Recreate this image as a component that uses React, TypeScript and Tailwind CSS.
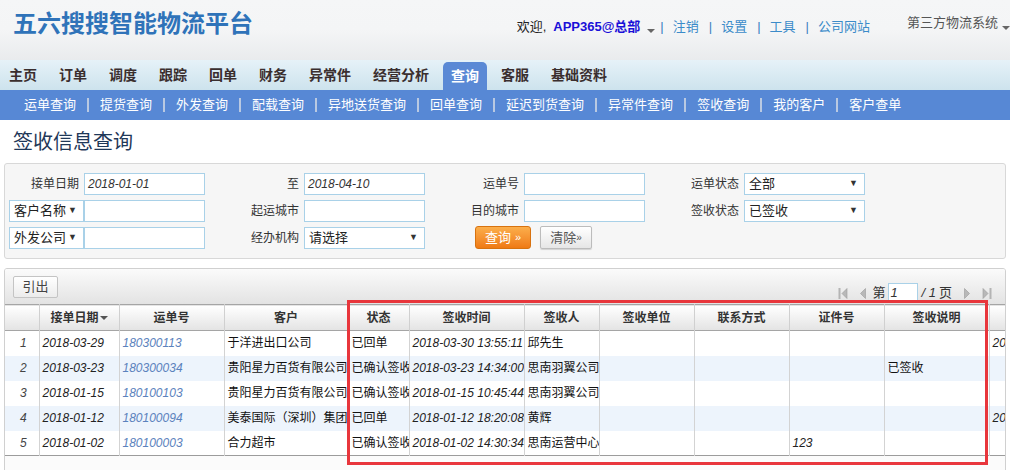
import React from 'react';

const topLinks = ['注销', '设置', '工具', '公司网站'];
const navItems = ['主页', '订单', '调度', '跟踪', '回单', '财务', '异常件', '经营分析', '查询', '客服', '基础资料'];
const subItems = ['运单查询', '提货查询', '外发查询', '配载查询', '异地送货查询', '回单查询', '延迟到货查询', '异常件查询', '签收查询', '我的客户', '客户查单'];

const cols = [
  { title: '', w: 34 },
  { title: '接单日期', w: 80, sort: true },
  { title: '运单号', w: 105 },
  { title: '客户', w: 124 },
  { title: '状态', w: 61 },
  { title: '签收时间', w: 115 },
  { title: '签收人', w: 75 },
  { title: '签收单位', w: 95 },
  { title: '联系方式', w: 95 },
  { title: '证件号', w: 95 },
  { title: '签收说明', w: 105 },
  { title: '', w: 100 },
];

const rows = [
  ['1', '2018-03-29', '180300113', '于洋进出口公司', '已回单', '2018-03-30 13:55:11', '邱先生', '', '', '', '', '2018-03-30'],
  ['2', '2018-03-23', '180300034', '贵阳星力百货有限公司', '已确认签收', '2018-03-23 14:34:00', '思南羽翼公司', '', '', '', '已签收', ''],
  ['3', '2018-01-15', '180100103', '贵阳星力百货有限公司', '已确认签收', '2018-01-15 10:45:44', '思南羽翼公司', '', '', '', '', ''],
  ['4', '2018-01-12', '180100094', '美泰国际（深圳）集团', '已回单', '2018-01-12 18:20:08', '黄辉', '', '', '', '', '2018-01-12'],
  ['5', '2018-01-02', '180100003', '合力超市', '已确认签收', '2018-01-02 14:30:34', '思南运营中心', '', '', '123', '', ''],
];

function Caret({ className = '' }: { className?: string }) {
  return <span className={`inline-block w-0 h-0 border-l-[4px] border-r-[4px] border-t-[4px] border-l-transparent border-r-transparent border-t-[#555] ${className}`} />;
}

function TextInput({ value = '', italic = false }: { value?: string; italic?: boolean }) {
  return (
    <div className={`h-[22px] w-[121px] border border-[#a9d1e8] bg-white px-[3px] text-[12px] leading-[20px] text-[#333] ${italic ? 'italic' : ''}`}>
      {value}
    </div>
  );
}

function Select({ value, w = 121 }: { value: string; w?: number }) {
  return (
    <div className="h-[22px] border border-[#a9d1e8] bg-white flex items-center justify-between pl-[4px] pr-[6px] text-[13px] text-[#222]" style={{ width: w }}>
      <span>{value}</span>
      <span className="text-[9px] text-[#333]">▼</span>
    </div>
  );
}

function Label({ text }: { text: string }) {
  return <div className="flex items-center justify-end pr-[5px] text-[12px] text-[#333]">{text}</div>;
}

function PagerIcon({ kind }: { kind: 'first' | 'prev' | 'next' | 'last' }) {
  const left = kind === 'first' || kind === 'prev';
  return (
    <svg width="10" height="13" viewBox="0 0 10 13">
      {kind === 'first' && <rect x="0.5" y="1" width="2" height="11" fill="#b4b4b4" />}
      {kind === 'last' && <rect x="7.5" y="1" width="2" height="11" fill="#b4b4b4" />}
      {left ? (
        <path d={kind === 'first' ? 'M9 1.5 L4 6.5 L9 11.5 Z' : 'M7.5 1.5 L2.5 6.5 L7.5 11.5 Z'} fill="#b8b8b8" stroke="#9a9a9a" strokeWidth="0.6" />
      ) : (
        <path d={kind === 'last' ? 'M1 1.5 L6 6.5 L1 11.5 Z' : 'M2.5 1.5 L7.5 6.5 L2.5 11.5 Z'} fill="#b8b8b8" stroke="#9a9a9a" strokeWidth="0.6" />
      )}
    </svg>
  );
}

export default function App() {
  const tableWidth = cols.reduce((s, c) => s + c.w, 0);
  return (
    <div className="relative w-[1010px] h-[470px] overflow-hidden bg-white font-['Liberation_Sans','Noto_Sans_CJK_SC',sans-serif]">
      {/* top header */}
      <div className="h-[60px] bg-gradient-to-b from-[#f5f6f7] via-[#f4f5f6] to-[#e9ebed] flex justify-between">
        <div className="pl-[13px] pt-[7px] text-[24px] font-bold text-[#2f73b9] leading-[34px]">五六搜搜智能物流平台</div>
        <div className="flex items-start">
          <div className="flex items-center pt-[18px] text-[13px] leading-[18px]">
            <span className="text-[#222]">欢迎,</span>
            <span className="ml-[7px] font-bold text-[#1a10d8]">APP365@总部</span>
            <Caret className="ml-[7px] mt-[8px] border-t-[#666]" />
            <span className="ml-[5px] text-[#3a7fc0]">|</span>
            {topLinks.map((l, i) => (
              <React.Fragment key={l}>
                <span className="ml-[9px] text-[#3b8bc9]">{l}</span>
                {i < topLinks.length - 1 && <span className="ml-[10px] text-[#3a7fc0]">|</span>}
              </React.Fragment>
            ))}
          </div>
          <div className="ml-[37px] pt-[14px] flex items-center text-[13px] text-[#555] leading-[18px]">
            <span>第三方物流系统</span>
            <Caret className="ml-[4px] mt-[9px] border-t-[#666]" />
          </div>
        </div>
      </div>

      {/* main nav */}
      <div className="h-[30px] bg-gradient-to-b from-[#e6f2f8] to-[#cde3ed] flex items-end -ml-[2px]">
        {navItems.map((n) =>
          n === '查询' ? (
            <div key={n} className="mx-[3px] px-[8px] h-[28px] rounded-t-[5px] bg-[#5a89d5] text-white font-bold text-[14px] flex items-center">{n}</div>
          ) : (
            <div key={n} className="px-[11px] h-[30px] flex items-center text-[14px] font-bold text-[#3a2e2e]">{n}</div>
          )
        )}
      </div>

      {/* sub nav */}
      <div className="h-[30px] bg-[#5788d5] flex items-center pl-[24px] text-[13px] text-white">
        {subItems.map((s, i) => (
          <React.Fragment key={s}>
            <span>{s}</span>
            {i < subItems.length - 1 && <span className="mx-[11px] w-[2px] h-[14px] bg-[#b9c9e2]" />}
          </React.Fragment>
        ))}
      </div>

      {/* page title */}
      <div className="pl-[13px] pt-[9px] h-[43px] text-[20px] leading-[26px] text-[#1f3858]">签收信息查询</div>

      {/* filter panel */}
      <div className="mx-[4px] h-[96px] rounded-[3px] border border-[#d8d8d8] bg-[#f6f6f6] pt-[9px]">
        <div className="grid grid-cols-[79px_121px_99px_121px_99px_121px_99px_121px] gap-y-[5px]">
          <Label text="接单日期" />
          <TextInput value="2018-01-01" italic />
          <Label text="至" />
          <TextInput value="2018-04-10" italic />
          <Label text="运单号" />
          <TextInput />
          <Label text="运单状态" />
          <Select value="全部" />

          <div className="pl-[4px]"><Select value="客户名称" w={75} /></div>
          <TextInput />
          <Label text="起运城市" />
          <TextInput />
          <Label text="目的城市" />
          <TextInput />
          <Label text="签收状态" />
          <Select value="已签收" />

          <div className="pl-[4px]"><Select value="外发公司" w={75} /></div>
          <TextInput />
          <Label text="经办机构" />
          <Select value="请选择" />
          <div className="col-span-2 flex items-center pl-[50px] -mt-[1px]">
            <div className="h-[23px] w-[56px] rounded-[3px] border border-[#d8720f] bg-gradient-to-b from-[#fbae4a] to-[#ef7a12] text-white text-[13px] flex items-center justify-center gap-[4px]">
              查询<span className="text-[11px]">»</span>
            </div>
            <div className="ml-[9px] h-[23px] w-[52px] rounded-[2px] border border-[#bcbcbc] bg-gradient-to-b from-white to-[#e6e6e6] text-[#555] text-[13px] flex items-center justify-center shadow-[0_1px_1px_rgba(0,0,0,0.15)]">
              清除<span className="text-[10px]">»</span>
            </div>
          </div>
        </div>
      </div>

      {/* grid panel */}
      <div className="mx-[4px] mt-[9px] h-[210px] border border-[#d0d0d0] rounded-t-[3px] overflow-hidden bg-[#fbfbfb]">
        <div className="h-[35px] bg-gradient-to-b from-[#fbfbfb] to-[#e3e3e3] flex items-start justify-between">
          <div className="ml-[8px] mt-[7px] h-[22px] w-[45px] rounded-[2px] border border-[#c4c4c4] bg-gradient-to-b from-white to-[#ececec] text-[13px] text-[#444] flex items-center justify-center">引出</div>
          <div className="mt-[14px] mr-[13px] flex items-center text-[13px] text-[#333]">
            <PagerIcon kind="first" />
            <span className="ml-[10px]"><PagerIcon kind="prev" /></span>
            <span className="ml-[5px]">第</span>
            <div className="ml-[2px] h-[20px] w-[30px] border border-[#a9d1e8] bg-white px-[2px] italic text-[#333] leading-[18px]">1</div>
            <span className="ml-[4px] italic">/ 1</span>
            <span className="ml-[3px]">页</span>
            <span className="ml-[10px]"><PagerIcon kind="next" /></span>
            <span className="ml-[10px]"><PagerIcon kind="last" /></span>
          </div>
        </div>
        <table className="table-fixed border-collapse text-[12px]" style={{ width: tableWidth }}>
          <colgroup>
            {cols.map((c, i) => (
              <col key={i} style={{ width: c.w }} />
            ))}
          </colgroup>
          <thead>
            <tr className="h-[26px] bg-gradient-to-b from-white to-[#e4e4e4] border-t border-b border-[#a5a5a5]">
              {cols.map((c, i) => (
                <th key={i} className="border-r border-[#d0d0d0] font-bold text-[#333] text-center px-[2px] whitespace-nowrap overflow-hidden">
                  {c.title}
                  {c.sort && <Caret className="ml-[1px] mb-[2px] border-t-[#333]" />}
                </th>
              ))}
            </tr>
          </thead>
          <tbody>
            {rows.map((r, ri) => (
              <tr key={ri} className={`h-[25px] ${ri % 2 === 1 ? 'bg-[#edf4fc]' : 'bg-white'}`}>
                {r.map((v, ci) => {
                  let cls = 'text-[#111]';
                  if (ci === 0) cls = 'italic text-[#444] text-center';
                  else if (ci === 1 || ci === 5 || ci === 9 || ci === 11) cls = 'italic text-[#222]';
                  else if (ci === 2) cls = 'italic text-[#5b82bd]';
                  return (
                    <td key={ci} className={`border-r border-[#d3d3d3] pl-[3px] pr-0 whitespace-nowrap overflow-hidden text-clip ${cls}`}>
                      {v}
                    </td>
                  );
                })}
              </tr>
            ))}
            <tr className="border-t border-[#9c9c9c]">
              <td colSpan={cols.length} className="h-[14px] bg-[#fbfbfb]" />
            </tr>
          </tbody>
        </table>
      </div>

      {/* annotation box */}
      <div className="absolute left-[347px] top-[300px] w-[641px] h-[165px] border-[3px] border-[#e8363c] pointer-events-none" />
    </div>
  );
}
